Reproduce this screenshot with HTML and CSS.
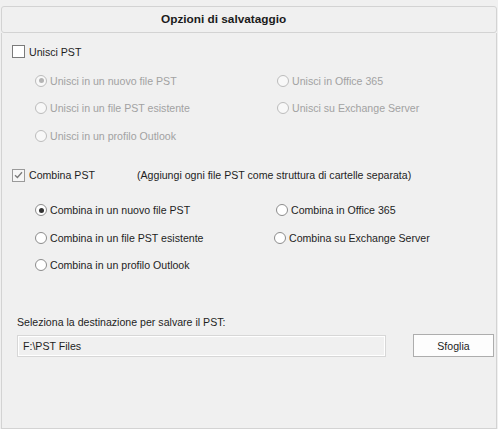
FILE: index.html
```html
<!DOCTYPE html>
<html>
<head>
<meta charset="utf-8">
<link rel="stylesheet" href="styles.css">
</head>
<body>
<div class="panel">
  <div class="header">Opzioni di salvataggio</div>
  <div class="body">
    <label class="check row-unisci"><span class="box"></span>Unisci PST</label>
    <div class="grid disabled g1">
      <label class="radio"><span class="dot on"></span>Unisci in un nuovo file PST</label>
      <label class="radio"><span class="dot"></span>Unisci in Office 365</label>
      <label class="radio"><span class="dot"></span>Unisci in un file PST esistente</label>
      <label class="radio"><span class="dot"></span>Unisci su Exchange Server</label>
      <label class="radio"><span class="dot"></span>Unisci in un profilo Outlook</label>
    </div>
    <div class="combina-row">
      <label class="check"><span class="box checked"><svg width="9" height="8" viewBox="0 0 9 8"><path d="M1 4.2 L3.4 6.5 L8 1.2" fill="none" stroke="#7a7a7a" stroke-width="1.3"/></svg></span>Combina PST</label>
      <span class="note">(Aggiungi ogni file PST come struttura di cartelle separata)</span>
    </div>
    <div class="grid g2">
      <label class="radio"><span class="dot on"></span>Combina in un nuovo file PST</label>
      <label class="radio"><span class="dot"></span>Combina in Office 365</label>
      <label class="radio"><span class="dot"></span>Combina in un file PST esistente</label>
      <label class="radio shift"><span class="dot"></span>Combina su Exchange Server</label>
      <label class="radio"><span class="dot"></span>Combina in un profilo Outlook</label>
    </div>
    <div class="dest-label">Seleziona la destinazione per salvare il PST:</div>
    <div class="dest-row">
      <div class="path">F:\PST Files</div>
      <button class="btn">Sfoglia</button>
    </div>
  </div>
</div>
</body>
</html>
```
FILE: styles.css
```css
html, body {
  margin: 0;
  padding: 0;
  background: #f0f0f0;
}
body {
  width: 498px;
  height: 429px;
  overflow: hidden;
  font-family: "Liberation Sans", Arial, sans-serif;
  font-size: 10.6px;
  color: #1e1e1e;
}
.panel {
  margin: 6px 0 0 1px;
  width: 496px;
  height: 423px;
  display: flex;
  flex-direction: column;
}
.header {
  height: 25px;
  border: 1px solid #d3d3d3;
  border-radius: 3px;
  box-sizing: content-box;
  font-weight: bold;
  font-size: 11.8px;
  line-height: 25px;
  padding-left: 159px;
  color: #1b1b1b;
}
.body {
  flex: 1;
  border: 1px solid #d3d3d3;
  border-top: none;
  display: flex;
  flex-direction: column;
}
.check {
  display: flex;
  align-items: center;
  height: 13px;
}
.row-unisci {
  margin: 12px 0 0 10px;
}
.box {
  width: 11px;
  height: 11px;
  border: 1px solid #7a7a7a;
  background: #ffffff;
  margin-right: 4px;
  display: flex;
  align-items: center;
  justify-content: center;
}
.box.checked {
  border-color: #9a9a9a;
  background: #f6f6f6;
}
.grid {
  display: grid;
  grid-template-columns: 242px auto;
  margin-left: 33px;
}
.radio {
  display: flex;
  align-items: center;
  height: 27.5px;
}
.g1 {
  margin-top: 9px;
}
.disabled {
  color: #a2a2a2;
}
.dot {
  width: 10px;
  height: 10px;
  border: 1px solid #8c8c8c;
  border-radius: 50%;
  background: #ffffff;
  margin-right: 3px;
  position: relative;
}
.disabled .dot {
  border-color: #bcbcbc;
  background: #f8f8f8;
}
.dot.on::after {
  content: "";
  position: absolute;
  left: 2.5px;
  top: 2.5px;
  width: 5px;
  height: 5px;
  border-radius: 50%;
  background: #333333;
}
.disabled .dot.on::after {
  background: #b4b4b4;
}
.combina-row {
  display: flex;
  align-items: center;
  margin: 19px 0 0 10px;
}
.combina-row .check {
  width: 125px;
}
.g2 {
  margin-top: 15px;
}
.g2 .radio:nth-child(2) {
  margin-left: -1px;
}
.g2 .radio.shift {
  margin-left: -3px;
}
.dest-label {
  margin: 37px 0 0 15px;
  line-height: 13px;
}
.dest-row {
  display: flex;
  align-items: flex-start;
  margin: 5px 0 0 15px;
}
.path {
  margin-top: 1px;
  width: 362px;
  height: 20px;
  border: 1px solid #d7d7d7;
  box-shadow: inset 1px 1px 0 #ffffff, inset -1px -1px 0 #ffffff;
  line-height: 20px;
  padding-left: 5px;
  color: #1e1e1e;
}
.btn {
  margin-left: 27px;
  width: 81px;
  height: 23px;
  border: 1px solid #adadad;
  background: #fdfdfd;
  font-family: "Liberation Sans", Arial, sans-serif;
  font-size: 10.6px;
  color: #1e1e1e;
  padding: 0;
}
```
